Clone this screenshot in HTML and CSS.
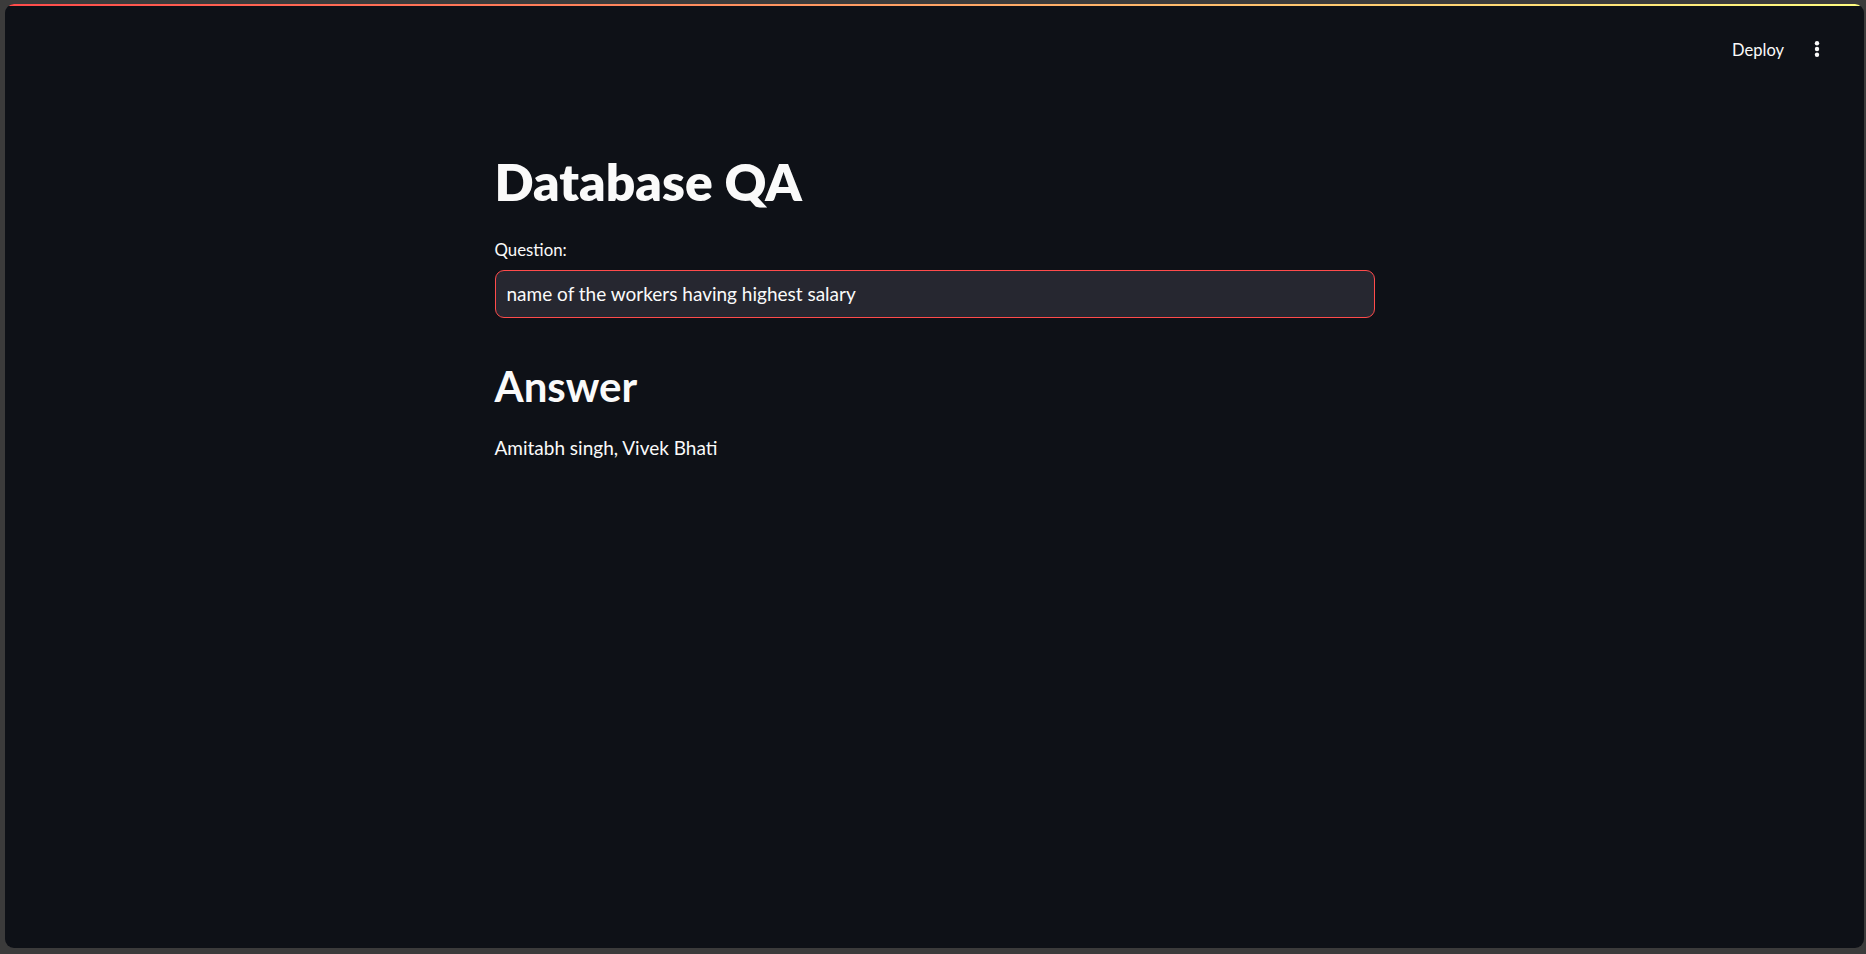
FILE: index.html
```html
<!DOCTYPE html>
<html lang="en">
<head>
<meta charset="utf-8">
<title>Database QA</title>
<link rel="stylesheet" href="styles.css">
</head>
<body>
<div class="window">
  <div class="decoration"></div>
  <header class="header">
    <button class="deploy">Deploy</button>
    <button class="menu" aria-label="Main menu">
      <svg width="6" height="16" viewBox="0 0 6 16"><circle cx="3" cy="2.3" r="2.2" fill="#fafafa"/><circle cx="3" cy="8" r="2.2" fill="#fafafa"/><circle cx="3" cy="13.7" r="2.2" fill="#fafafa"/></svg>
    </button>
  </header>
  <main class="main">
    <div class="block">
      <h1 class="title">Database QA</h1>
      <label class="label" for="q">Question:</label>
      <div class="input-wrap">
        <input id="q" class="input" type="text" value="name of the workers having highest salary">
      </div>
      <h2 class="subtitle">Answer</h2>
      <p class="answer">Amitabh singh, Vivek Bhati</p>
    </div>
  </main>
</div>
</body>
</html>
```
FILE: styles.css
```css
html, body {
  margin: 0;
  height: 954px;
}
body {
  background: #3b3b3b;
  padding: 4px 2px 6px 5px;
  box-sizing: border-box;
  font-family: Lato, "Noto Sans", sans-serif;
  color: #fafafa;
  overflow: hidden;
}
.window {
  height: 944px;
  background: #0e1117;
  border-radius: 9px;
  overflow: hidden;
  display: flex;
  flex-direction: column;
}
.decoration {
  height: 2px;
  flex: none;
  background: linear-gradient(90deg, #ff4b4b, #fffd80);
}
.header {
  height: 86px;
  flex: none;
  display: flex;
  justify-content: flex-end;
  align-items: center;
  padding-right: 44px;
  gap: 30px;
}
.deploy {
  background: none;
  border: none;
  padding: 0;
  margin-top: 2px;
  color: #fafafa;
  font-family: Lato, "Noto Sans", sans-serif;
  font-size: 16.5px;
  line-height: 20px;
}
.menu {
  background: none;
  border: none;
  padding: 0;
  width: 6px;
  height: 16px;
  display: flex;
}
.main {
  display: flex;
  justify-content: center;
}
.block {
  width: 880px;
  padding-top: 59px;
}
.title {
  margin: 0;
  font-size: 51.5px;
  line-height: 1.2;
  font-weight: 800;
}
.label {
  display: block;
  margin-top: 27px;
  font-size: 16.8px;
  line-height: 1.2;
}
.input-wrap {
  margin-top: 10px;
  height: 48px;
  box-sizing: border-box;
  border: 1px solid #ff4b4b;
  border-radius: 9px;
  background: #262730;
  display: flex;
}
.input {
  flex: 1;
  background: none;
  border: none;
  outline: none;
  padding: 0 11px;
  color: #fafafa;
  font-family: Lato, "Noto Sans", sans-serif;
  font-size: 19px;
}
.subtitle {
  margin: 43px 0 0;
  font-size: 42px;
  line-height: 1.2;
  font-weight: 700;
}
.answer {
  margin: 26px 0 0;
  font-size: 19px;
  line-height: 1.2;
}
```
